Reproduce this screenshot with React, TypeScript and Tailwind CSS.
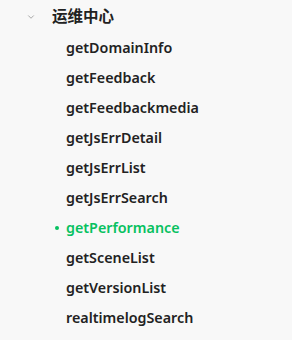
import { ChevronDown } from "lucide-react";

const items = [
  "getDomainInfo",
  "getFeedback",
  "getFeedbackmedia",
  "getJsErrDetail",
  "getJsErrList",
  "getJsErrSearch",
  "getPerformance",
  "getSceneList",
  "getVersionList",
  "realtimelogSearch",
];

const active = "getPerformance";

export default function App() {
  return (
    <div
      className="w-[292px] h-[340px] bg-[#f8f8f8] overflow-hidden"
      style={{ fontFamily: '"Noto Sans", "Noto Sans CJK SC", sans-serif' }}
    >
      {/* Group header */}
      <div className="flex items-center h-[33px] pl-[26px]">
        <ChevronDown className="w-[10px] h-[10px] text-[#999] mt-[1px]" strokeWidth={2} />
        <span className="ml-[16px] text-[15.5px] font-semibold text-[#222]">运维中心</span>
      </div>

      {/* Items */}
      <ul className="flex flex-col">
        {items.map((name) => {
          const isActive = name === active;
          return (
            <li key={name} className="relative flex items-center h-[30px] pl-[66px]">
              {isActive && (
                <span className="absolute left-[55px] w-[4px] h-[4px] rounded-full bg-[#07c160]" />
              )}
              <span
                className={`text-[14.3px] font-semibold ${
                  isActive ? "text-[#07c160]" : "text-[#222]"
                }`}
              >
                {name}
              </span>
            </li>
          );
        })}
      </ul>
    </div>
  );
}
